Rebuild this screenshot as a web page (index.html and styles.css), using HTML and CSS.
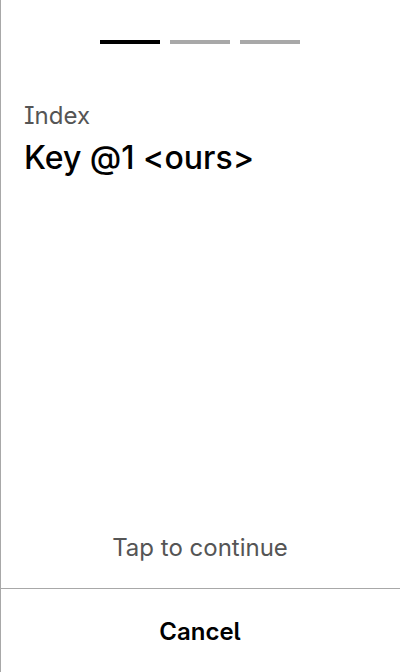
FILE: index.html
```html
<!DOCTYPE html>
<html lang="en">
<head>
<meta charset="utf-8">
<meta name="viewport" content="width=device-width, initial-scale=1">
<title>Index</title>
<link rel="stylesheet" href="styles.css">
</head>
<body>
<main class="screen">
  <div class="steps" role="img" aria-label="1 / 3">
    <span class="step step-active"></span>
    <span class="step"></span>
    <span class="step"></span>
  </div>
  <dl class="field">
    <dt class="label">Index</dt>
    <dd class="value">Key @1 &lt;ours&gt;</dd>
  </dl>
  <button class="continue" type="button">Tap to continue</button>
  <button class="cancel" type="button">Cancel</button>
</main>
</body>
</html>
```
FILE: styles.css
```css
* {
  box-sizing: border-box;
}

body {
  margin: 0;
  background: #fff;
  color: #000;
  font-family: Inter, sans-serif;
  /* Serifed capital I, tailed lowercase l, no contextual alternates */
  font-feature-settings: "cv08", "cv05", "calt" 0;
}

.screen {
  display: flex;
  flex-direction: column;
  min-height: 100vh;
  box-shadow: inset 1px 0 #a8a8a8;
}

.steps {
  display: flex;
  justify-content: center;
  gap: 10px;
  padding: 40px 0 56px;
}

.step {
  width: 60px;
  height: 4px;
  background: #a8a8a8;
}

.step-active {
  background: #000;
}

.field {
  flex: 1;
  margin: 0;
  padding: 0 24px;
}

.label {
  font-size: 24px;
  line-height: 32px;
  color: #555;
}

.value {
  margin: 4px 0 0;
  font-size: 32px;
  line-height: 44px;
  font-weight: 500;
}

button {
  border: 0;
  padding: 0;
  background: none;
  font-family: inherit;
  font-feature-settings: inherit;
  font-size: 24px;
  line-height: 32px;
}

.continue {
  padding: 24px 0;
  color: #555;
}

.cancel {
  padding: 27px 0 24px;
  border-top: 1px solid #a8a8a8;
  color: #000;
  font-weight: 600;
}
```
